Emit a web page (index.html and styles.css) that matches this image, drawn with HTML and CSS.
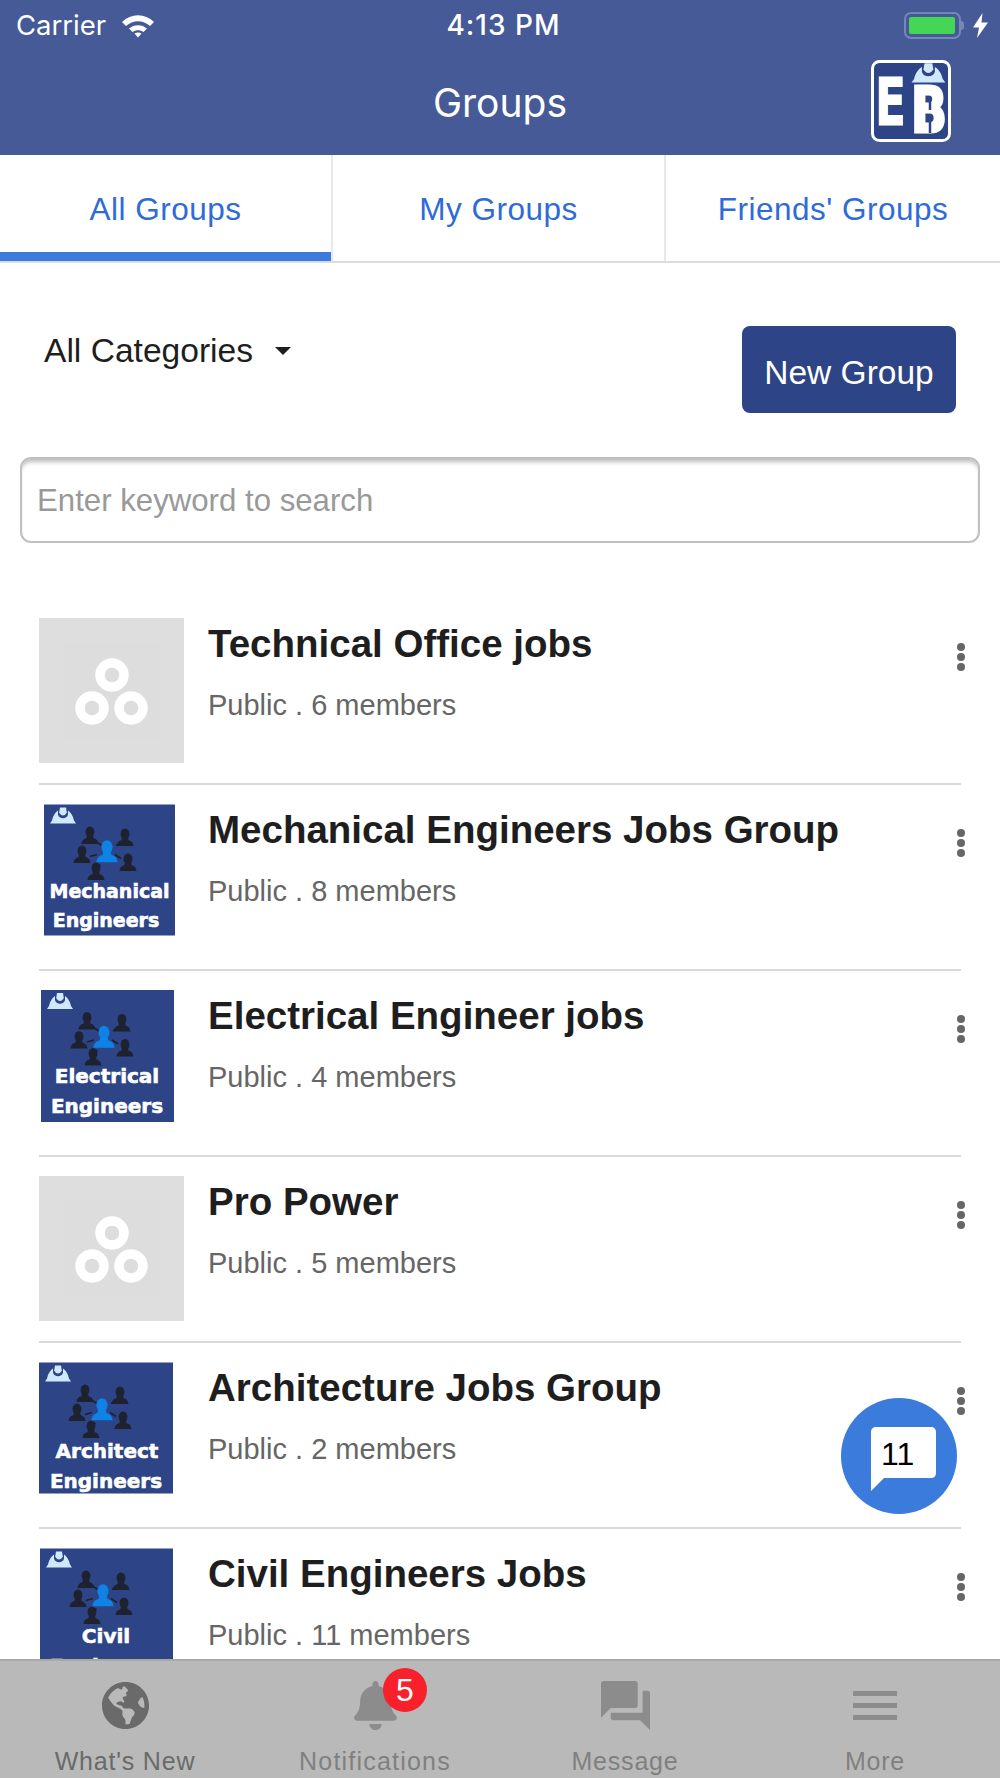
FILE: index.html
```html
<!DOCTYPE html>
<html>
<head>
  <meta charset="utf-8">
  <link rel="stylesheet" href="styles.css">
</head>
<body>
  <svg class="defs" width="0" height="0">
    <defs>
      <g id="person">
        <ellipse cx="0" cy="-3.500" rx="4.400" ry="5.600"/>
        <path d="M-3 0 3 0 3.500 2.500C6 3.500 8 4.500 8.500 8.500L-8.500 8.500C-8 4.500-6 3.500-3.500 2.500Z"/>
      </g>
      <g id="hat">
        <path d="M0 15 2 12C3 7 5.500 3.500 8 2L8 6C9 11 17 11 18 6L18 2C20.500 3.500 23 7 24 12L26 15Z" fill="#cfe8fb"/>
        <path d="M10 -1 16 -1 16.800 4C15 8 11 8 9.200 4Z" fill="#cfe8fb"/>
      </g>
      <g id="network">
        <use href="#hat" x="6" y="4"/>
        <path d="M53 38 58 41M72 41 77 38M46 52 53 50M71 50 77 54M56 60 54 66" stroke="#1e2230" stroke-width="1.800"/>
        <g fill="#1e2230">
          <use href="#person" x="46" y="31"/>
          <use href="#person" x="81" y="33"/>
          <use href="#person" x="38" y="50"/>
          <use href="#person" x="84" y="58"/>
          <use href="#person" x="52" y="67"/>
        </g>
        <use href="#person" transform="translate(63 47) scale(1.250)" fill="#0f82e6"/>
      </g>
      <g id="rings" fill="none" stroke="#fff" stroke-width="9.500">
        <circle cx="73" cy="57" r="12"/>
        <circle cx="53" cy="90" r="12"/>
        <circle cx="92" cy="90" r="12"/>
      </g>
    </defs>
  </svg>

  <div class="app">
    <header class="top-bar">
      <div class="status-bar">
        <div class="status-left">
          <span class="carrier">Carrier</span>
          <svg class="wifi" viewBox="0 0 34 25">
            <path d="M1 9C10 0 24 0 33 9L29 13C22 6.500 12 6.500 5 13Z" fill="#fff"/>
            <path d="M8 15.500C13 11 21 11 26 15.500L22.500 19C19 16.500 15 16.500 11.500 19Z" fill="#fff"/>
            <path d="M13.500 20.500C15.500 19 18.500 19 20.500 20.500L17 24.500Z" fill="#fff"/>
          </svg>
        </div>
        <span class="clock">4:13 PM</span>
        <div class="status-right">
          <div class="battery"><div class="battery-level"></div></div>
          <div class="battery-tip"></div>
          <svg class="bolt" viewBox="0 0 15 25"><path d="M9.500 0 0 14.500 6 14.500 4 25 15 9.500 8.500 9.500Z" fill="#fff"/></svg>
        </div>
      </div>
      <div class="nav-bar">
        <h1 class="nav-title">Groups</h1>
        <svg class="brand" viewBox="0 0 80 82">
          <rect x="1.500" y="1.500" width="77" height="79" rx="7" fill="#2d4486" stroke="#fff" stroke-width="3"/>
          <use href="#hat" transform="translate(40.500 4.500) scale(1.300 1.200)"/>
          <text class="brand-letter" x="4" y="65" font-size="65" textLength="31" lengthAdjust="spacingAndGlyphs">E</text>
          <text class="brand-letter brand-letter-b" x="40" y="72" font-size="62" textLength="36" lengthAdjust="spacingAndGlyphs">B</text>
          <path d="M59 40V50M59 57V73" stroke="#2d4486" stroke-width="2.500"/>
        </svg>
      </div>
    </header>

    <nav class="tabs">
      <a class="tab tab-active">All Groups</a>
      <a class="tab">My Groups</a>
      <a class="tab">Friends' Groups</a>
    </nav>

    <main class="content">
      <div class="filter-row">
        <div class="category-select">
          <span>All Categories</span>
          <span class="caret"></span>
        </div>
        <button class="new-group-btn">New Group</button>
      </div>

      <input class="search-box" type="text" placeholder="Enter keyword to search">

      <div class="group-list">
        <div class="group-row">
          <div class="thumb">
            <svg class="thumb-blank" viewBox="0 0 145 145">
              <rect width="145" height="145" fill="#dedede"/>
              <rect x="24" y="24" width="97" height="97" fill="#dddddd"/>
              <use href="#rings"/>
            </svg>
          </div>
          <div class="group-info">
            <div class="group-name">Technical Office jobs</div>
            <div class="group-meta">Public . 6 members</div>
          </div>
          <div class="row-menu"><i></i><i></i><i></i></div>
        </div>

        <div class="group-row">
          <div class="thumb">
            <svg class="logo logo-mech" viewBox="0 0 131 131">
              <rect width="131" height="131" fill="#2d4486"/>
              <use href="#network"/>
              <text class="logo-text" x="65.500" y="93" font-size="19">Mechanical</text>
              <text class="logo-text" x="62" y="122" font-size="19">Engineers</text>
            </svg>
          </div>
          <div class="group-info">
            <div class="group-name">Mechanical Engineers Jobs Group</div>
            <div class="group-meta">Public . 8 members</div>
          </div>
          <div class="row-menu"><i></i><i></i><i></i></div>
        </div>

        <div class="group-row">
          <div class="thumb">
            <svg class="logo logo-elec" viewBox="0 0 133 132">
              <rect width="133" height="132" fill="#2d4486"/>
              <use href="#network"/>
              <text class="logo-text" x="66" y="93" font-size="20">Electrical</text>
              <text class="logo-text" x="66" y="123" font-size="20">Engineers</text>
            </svg>
          </div>
          <div class="group-info">
            <div class="group-name">Electrical Engineer jobs</div>
            <div class="group-meta">Public . 4 members</div>
          </div>
          <div class="row-menu"><i></i><i></i><i></i></div>
        </div>

        <div class="group-row">
          <div class="thumb">
            <svg class="thumb-blank" viewBox="0 0 145 145">
              <rect width="145" height="145" fill="#dedede"/>
              <rect x="24" y="24" width="97" height="97" fill="#dddddd"/>
              <use href="#rings"/>
            </svg>
          </div>
          <div class="group-info">
            <div class="group-name">Pro Power</div>
            <div class="group-meta">Public . 5 members</div>
          </div>
          <div class="row-menu"><i></i><i></i><i></i></div>
        </div>

        <div class="group-row">
          <div class="thumb">
            <svg class="logo logo-arch" viewBox="0 0 134 131">
              <rect width="134" height="131" fill="#2d4486"/>
              <use href="#network"/>
              <text class="logo-text" x="68" y="95" font-size="20">Architect</text>
              <text class="logo-text" x="67" y="125" font-size="20">Engineers</text>
            </svg>
          </div>
          <div class="group-info">
            <div class="group-name">Architecture Jobs Group</div>
            <div class="group-meta">Public . 2 members</div>
          </div>
          <div class="row-menu"><i></i><i></i><i></i></div>
        </div>

        <div class="group-row">
          <div class="thumb">
            <svg class="logo logo-civil" viewBox="0 0 133 131">
              <rect width="133" height="131" fill="#2d4486"/>
              <use href="#network"/>
              <text class="logo-text" x="66" y="94" font-size="20">Civil</text>
              <text class="logo-text" x="66" y="124" font-size="20">Engineers</text>
            </svg>
          </div>
          <div class="group-info">
            <div class="group-name">Civil Engineers Jobs</div>
            <div class="group-meta">Public . 11 members</div>
          </div>
          <div class="row-menu"><i></i><i></i><i></i></div>
        </div>
      </div>

      <div class="chat-fab">
        <svg class="chat-bubble" viewBox="0 0 65 64">
          <path d="M5 0H60C63 0 65 2 65 5V46C65 49 63 51 60 51H13L0 64V5C0 2 2 0 5 0Z" fill="#fff"/>
        </svg>
        <span class="chat-count">11</span>
      </div>
    </main>

    <footer class="tab-bar">
      <div class="bar-item bar-item-first">
        <svg class="bar-icon icon-globe" viewBox="0 0 496 512">
          <path d="M248 8C111.030 8 0 119.030 0 256s111.030 248 248 248 248-111.030 248-248S384.970 8 248 8zm82.290 357.600c-3.900 3.880-7.990 7.950-11.310 11.280-2.990 3-5.100 6.700-6.170 10.710-1.510 5.660-2.730 11.380-4.770 16.870l-17.390 46.850c-13.760 3-28 4.690-42.650 4.690v-27.380c1.690-12.620-7.640-36.260-22.630-51.250-6-6-9.370-14.140-9.370-22.630v-32.010c0-11.640-6.270-22.340-16.460-27.970-14.370-7.950-34.810-19.060-48.810-26.110-11.480-5.780-22.100-13.140-31.650-21.750l-.8-.72a114.792 114.792 0 0 1-18.060-20.740c-9.380-13.770-24.660-36.420-34.590-51.140 20.470-45.500 57.360-82.040 103.200-101.890l24.010 12.010C203.480 89.740 216 82.010 216 70.110v-11.300c7.990-1.290 16.120-2.110 24.390-2.420l28.300 28.300c6.250 6.250 6.250 16.380 0 22.630L264 112l-10.340 10.340c-3.120 3.120-3.120 8.190 0 11.310l4.690 4.690c3.120 3.120 3.120 8.190 0 11.310l-8 8a8.008 8.008 0 0 1-5.660 2.340h-8.990c-2.080 0-4.080.81-5.580 2.270l-9.920 9.650a8.008 8.008 0 0 0-1.580 9.310l15.590 31.190c2.660 5.320-1.210 11.580-7.150 11.580h-5.640c-1.930 0-3.790-.7-5.240-1.960l-9.280-8.060a16.017 16.017 0 0 0-15.550-3.100l-31.170 10.390a11.950 11.950 0 0 0-8.170 11.340c0 4.530 2.560 8.660 6.610 10.690l11.080 5.540c9.410 4.710 19.790 7.160 30.310 7.160s22.590 27.290 32 32h66.750c8.490 0 16.620 3.370 22.630 9.370l13.690 13.690a30.503 30.503 0 0 1 8.930 21.570 46.536 46.536 0 0 1-13.720 32.980zM417 274.250c-5.790-1.450-10.840-5-14.150-9.970l-17.980-26.970a23.970 23.970 0 0 1 0-26.620l19.590-29.380c2.320-3.470 5.500-6.290 9.240-8.150l12.980-6.490C440.200 193.590 448 223.870 448 256c0 8.670-.74 17.160-1.820 25.540L417 274.250z"/>
        </svg>
        <span class="bar-label">What's New</span>
      </div>
      <div class="bar-item">
        <svg class="bar-icon icon-bell" viewBox="0 0 448 512">
          <path d="M224 512c35.320 0 63.970-28.650 63.970-64H160.030c0 35.350 28.650 64 63.970 64zm215.390-149.710c-19.320-20.760-55.470-51.990-55.470-154.290 0-77.700-54.480-139.900-127.940-155.160V32c0-17.670-14.320-32-31.980-32s-31.980 14.330-31.980 32v20.840C118.560 68.100 64.080 130.300 64.080 208c0 102.300-36.150 133.530-55.470 154.290-6 6.450-8.660 14.160-8.610 21.710.11 16.400 12.980 32 32.100 32h383.800c19.120 0 32-15.600 32.100-32 .05-7.550-2.610-15.270-8.610-21.710z"/>
        </svg>
        <span class="badge">5</span>
        <span class="bar-label bar-label-wide">Notifications</span>
      </div>
      <div class="bar-item">
        <svg class="bar-icon icon-forum" viewBox="2 2 20 20">
          <path d="M21 6h-2v9H6v2c0 .55.45 1 1 1h11l4 4V7c0-.55-.45-1-1-1zm-4 6V3c0-.55-.45-1-1-1H3c-.55 0-1 .45-1 1v14l4-4h10c.55 0 1-.45 1-1z"/>
        </svg>
        <span class="bar-label">Message</span>
      </div>
      <div class="bar-item">
        <svg class="bar-icon icon-menu" viewBox="0 0 44 49">
          <path d="M0 10H44V15H0ZM0 22H44V27H0ZM0 34H44V39H0Z"/>
        </svg>
        <span class="bar-label">More</span>
      </div>
    </footer>
  </div>
</body>
</html>
```

FILE: styles.css
```css
* {
  box-sizing: border-box;
}

body {
  margin: 0;
  padding: 0;
  font-family: "Liberation Sans", Arial, sans-serif;
  background: #fff;
}

.defs {
  position: absolute;
}

.app {
  width: 1000px;
  height: 1778px;
  display: flex;
  flex-direction: column;
  overflow: hidden;
}

.top-bar {
  height: 155px;
  flex: none;
  background: #455a96;
  color: #fff;
}

.status-bar {
  height: 50px;
  padding: 0 12px 0 16px;
  display: grid;
  grid-template-columns: 1fr auto 1fr;
  align-items: center;
  font-family: Inter, sans-serif;
}

.status-left {
  display: flex;
  align-items: center;
  gap: 15px;
}

.carrier {
  font-size: 27.500px;
}

.wifi {
  width: 34px;
  height: 25px;
}

.clock {
  margin-left: 3px;
  font-size: 28px;
  font-weight: 500;
  letter-spacing: 1px;
}

.status-right {
  display: flex;
  align-items: center;
  justify-content: flex-end;
}

.battery {
  width: 57px;
  height: 27px;
  padding: 3px;
  border: 2px solid #7587b6;
  border-radius: 7px;
}

.battery-level {
  height: 100%;
  width: 46px;
  background: #44d654;
  border-radius: 2px;
}

.battery-tip {
  width: 3px;
  height: 9px;
  background: #7587b6;
  border-radius: 0 3px 3px 0;
  margin-right: 9px;
}

.bolt {
  width: 15px;
  height: 25px;
}

.nav-bar {
  height: 105px;
  position: relative;
}

.nav-title {
  margin: 0;
  padding-top: 28px;
  text-align: center;
  font-family: Inter, sans-serif;
  font-size: 39px;
  font-weight: 400;
  line-height: 50px;
}

.brand {
  position: absolute;
  left: 871px;
  top: 10px;
  width: 80px;
  height: 82px;
}

.brand-letter {
  font-family: "DejaVu Sans", sans-serif;
  font-weight: 700;
  fill: #fff;
  stroke: #fff;
  stroke-width: 1;
}

.brand-letter-b {
  stroke-width: 3;
}

.tabs {
  height: 108px;
  flex: none;
  display: grid;
  grid-template-columns: 333px 333px 334px;
  border-bottom: 2px solid #dcdcdc;
}

.tab {
  display: flex;
  align-items: center;
  justify-content: center;
  padding-top: 2px;
  font-size: 31.500px;
  letter-spacing: 0.500px;
  color: #2f6bd8;
  border-right: 2px solid #e8e8e8;
}

.tab:last-child {
  border-right: none;
}

.tab-active {
  box-shadow: inset 0 -9px 0 #3b7bdc;
}

.content {
  flex: 1;
  min-height: 0;
  position: relative;
  overflow: hidden;
  background: #fff;
}

.filter-row {
  height: 194px;
  padding: 63px 44px 0 44px;
  display: flex;
  justify-content: space-between;
  align-items: flex-start;
}

.category-select {
  display: flex;
  align-items: center;
  gap: 22px;
  height: 50px;
  font-size: 33.600px;
  color: #1e1e1e;
}

.caret {
  width: 0;
  height: 0;
  border-left: 8px solid transparent;
  border-right: 8px solid transparent;
  border-top: 8px solid #1e1e1e;
}

.new-group-btn {
  width: 214px;
  height: 87px;
  padding: 6px 0 0 0;
  border: none;
  border-radius: 8px;
  background: #2d4486;
  color: #fff;
  font-family: inherit;
  font-size: 33.500px;
}

.search-box {
  display: block;
  width: 960px;
  height: 86px;
  margin: 0 20px;
  padding: 2px 15px 0 15px;
  border: 2px solid #c0c0c0;
  border-radius: 11px;
  box-shadow: inset 0 5px 4px -2px #bcbcbc;
  outline: none;
  font-family: inherit;
  font-size: 31.200px;
}

.search-box::placeholder {
  color: #999;
}

.group-list {
  margin: 75px 39px 0 39px;
}

.group-row {
  height: 167px;
  margin-bottom: 19px;
  padding-bottom: 20px;
  display: flex;
  position: relative;
  border-bottom: 2px solid #d9d9d9;
}

.thumb {
  width: 145px;
  height: 145px;
  flex: none;
}

.thumb-blank {
  display: block;
  width: 145px;
  height: 145px;
}

.logo {
  display: block;
  height: 132px;
}

.logo-mech {
  width: 131px;
  margin-left: 5px;
}

.logo-elec {
  width: 133px;
  margin-left: 2px;
}

.logo-arch {
  width: 134px;
}

.logo-civil {
  width: 133px;
  margin-left: 1px;
}

.logo-text {
  font-family: "DejaVu Sans", sans-serif;
  font-weight: 700;
  fill: #fff;
  stroke: #fff;
  stroke-width: 0.600;
  text-anchor: middle;
}

.group-info {
  flex: 1;
  padding-left: 24px;
}

.group-name {
  margin-top: 4px;
  font-size: 38.500px;
  line-height: 44px;
  font-weight: 700;
  color: #1e1e1e;
}

.group-meta {
  margin-top: 22px;
  font-size: 29px;
  line-height: 34px;
  color: #666;
}

.row-menu {
  position: absolute;
  right: -4px;
  top: 25px;
  display: flex;
  flex-direction: column;
  gap: 2px;
}

.row-menu i {
  width: 8px;
  height: 8px;
  border-radius: 50%;
  background: #666;
}

.chat-fab {
  position: absolute;
  left: 841px;
  top: 1135px;
  width: 116px;
  height: 116px;
  border-radius: 50%;
  background: #3b7bdc;
}

.chat-bubble {
  position: absolute;
  left: 30px;
  top: 29px;
  width: 65px;
  height: 64px;
}

.chat-count {
  position: absolute;
  left: 40px;
  top: 37px;
  font-size: 32px;
  line-height: 38px;
  color: #000;
}

.tab-bar {
  height: 119px;
  flex: none;
  display: grid;
  grid-template-columns: repeat(4, 250px);
  background: #b9b9b9;
  border-top: 2px solid #a8a8a8;
  color: #8c8c8c;
}

.bar-item {
  position: relative;
  display: flex;
  flex-direction: column;
  align-items: center;
  padding-top: 20px;
  fill: #8c8c8c;
}

.bar-item-first {
  fill: #6a6a6a;
}

.bar-icon {
  display: block;
  height: 49px;
}

.icon-globe {
  width: 47px;
}

.icon-bell {
  width: 43px;
}

.icon-forum {
  width: 49px;
}

.icon-menu {
  width: 44px;
}

.bar-label {
  margin-top: 16px;
  font-size: 25px;
  line-height: 30px;
  letter-spacing: 0.800px;
  color: #808080;
}

.bar-label-wide {
  letter-spacing: 1.200px;
}

.bar-item-first .bar-label {
  color: #6a6a6a;
}

.badge {
  position: absolute;
  left: 133px;
  top: 7px;
  width: 44px;
  height: 44px;
  border-radius: 50%;
  background: #f8202b;
  color: #fff;
  font-size: 32px;
  line-height: 44px;
  text-align: center;
}
```
